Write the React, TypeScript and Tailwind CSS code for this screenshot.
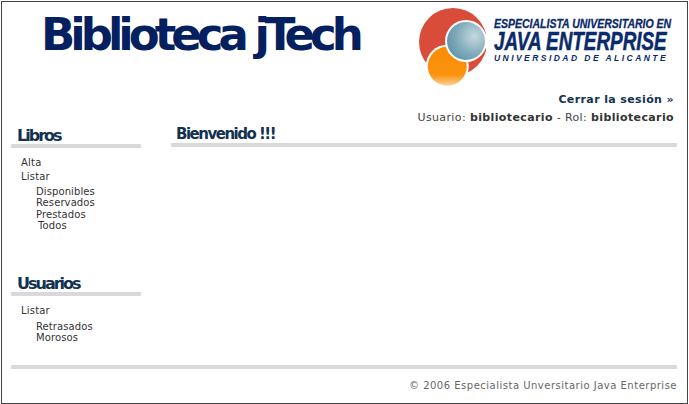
const verdana = "font-['DejaVu_Sans',sans-serif]";

function Logo() {
  return (
    <div className="flex w-[255px] h-[80px] items-start">
      <svg width="68" height="80" viewBox="0 0 68 80" className="shrink-0">
        <defs>
          <radialGradient id="blue" cx="0.72" cy="0.38" r="0.8">
            <stop offset="0" stopColor="#c6d9df" />
            <stop offset="0.6" stopColor="#7fa9ba" />
            <stop offset="1" stopColor="#5f92a8" />
          </radialGradient>
          <linearGradient id="orange" x1="0" y1="0" x2="0" y2="1">
            <stop offset="0" stopColor="#fb8c05" />
            <stop offset="0.72" stopColor="#fb930f" />
            <stop offset="1" stopColor="#fdd09a" />
          </linearGradient>
        </defs>
        <circle cx="35" cy="34" r="34" fill="#d94c3a" />
        <circle cx="29.3" cy="58.2" r="21.5" fill="#fff" />
        <circle cx="29.3" cy="58.2" r="19.5" fill="url(#orange)" />
        <circle cx="48" cy="33" r="21" fill="#fff" />
        <circle cx="48" cy="33" r="19" fill="url(#blue)" />
      </svg>
      <div className="ml-[8px] pt-[10px] font-['Liberation_Sans',sans-serif] italic font-bold text-[#0a2a6b]">
        <div className="text-[12px] leading-[13px] scale-x-[0.875] origin-left whitespace-nowrap [-webkit-text-stroke:0.3px_#0a2a6b]">ESPECIALISTA UNIVERSITARIO EN</div>
        <div className="text-[25px] leading-[21px] scale-x-[0.755] origin-left whitespace-nowrap [-webkit-text-stroke:0.5px_#0a2a6b]">JAVA ENTERPRISE</div>
        <div className="text-[8.5px] leading-[12px] tracking-[2.45px] whitespace-nowrap">UNIVERSIDAD DE ALICANTE</div>
      </div>
    </div>
  );
}

function SideSection({ title, top, sub, className, subClassName }: { title: string; top: string[]; sub: string[]; className?: string; subClassName: string }) {
  return (
    <div className={className}>
      <h2 className="pl-[6px] text-[16px] leading-[16px] font-bold tracking-[-2px] text-[#12324f]">{title}</h2>
      <div className="h-[4px] bg-[#d9d9d9]" />
      <ul className="mt-[8px] pl-[10px] text-[10px] leading-[14px] tracking-[0.2px] text-[#333]">
        {top.map((t) => (
          <li key={t}>{t}</li>
        ))}
      </ul>
      <ul className={`${subClassName} pl-[25px] text-[10px] leading-[11.4px] tracking-[0.1px] text-[#333]`}>
        {sub.map((t) => (
          <li key={t} className={t === 'Todos' ? 'pl-[2px]' : ''}>{t}</li>
        ))}
      </ul>
    </div>
  );
}

export default function App() {
  return (
    <div className={`${verdana} w-[689px] h-[404px] bg-white overflow-hidden`}>
      <div className="mt-[1px] ml-[1px] w-[687px] h-[403px] border border-[#444] flex flex-col pl-[9px] pr-[10px]">
        <header className="h-[89px] flex pt-[6px] justify-between pr-[4px]">
          <h1 className="ml-[30px] mt-[1px] text-[45px] leading-[52px] font-bold tracking-[-5px] text-[#04205f] whitespace-nowrap">Biblioteca jTech</h1>
          <Logo />
        </header>
        <div className="text-right pr-[3px] text-[11px] leading-[18px] text-[#444] tracking-[0.38px]">
          <div className="font-bold text-[#12324f]">Cerrar la sesión »</div>
          <div>
            Usuario: <b className="text-[#333]">bibliotecario</b> - Rol: <b className="text-[#333]">bibliotecario</b>
          </div>
        </div>
        <div className="flex flex-1 -mt-[2px]">
          <aside className="w-[130px] shrink-0 pt-[3px]">
            <SideSection subClassName="mt-[2px]" title="Libros" top={['Alta', 'Listar']} sub={['Disponibles', 'Reservados', 'Prestados', 'Todos']} />
            <SideSection subClassName="mt-[3px]" className="mt-[44px]" title="Usuarios" top={['Listar']} sub={['Retrasados', 'Morosos']} />
          </aside>
          <main className="ml-[30px] flex-1">
            <h2 className="pl-[5px] text-[15px] leading-[18px] font-bold tracking-[-1.5px] text-[#12324f]">Bienvenido !!!</h2>
            <div className="h-[4px] bg-[#d9d9d9]" />
          </main>
        </div>
        <footer className="pb-[11px]">
          <div className="h-[4px] bg-[#d9d9d9]" />
          <p className="mt-[11px] text-right text-[10px] leading-[12px] tracking-[0.5px] text-[#666]">© 2006 Especialista Unversitario Java Enterprise</p>
        </footer>
      </div>
    </div>
  );
}
